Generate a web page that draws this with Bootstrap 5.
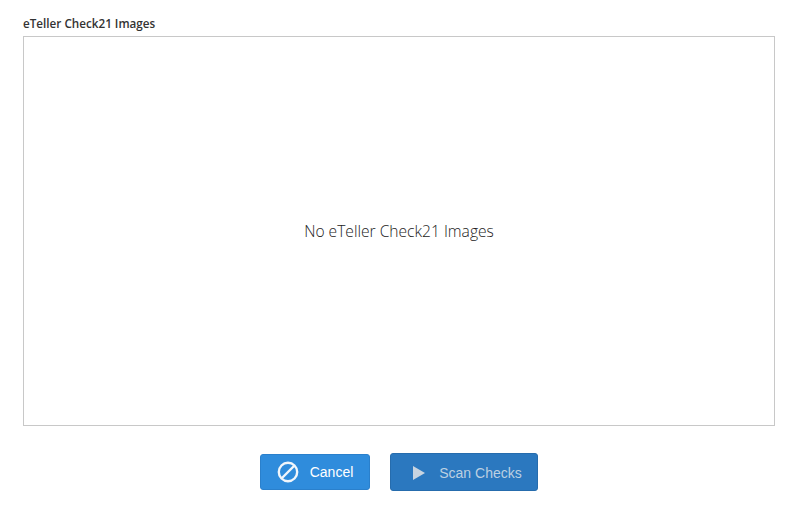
<!DOCTYPE html>
<html lang="en">
<head>
<meta charset="utf-8">
<title>eTeller Check21 Images</title>
<link href="https://cdn.jsdelivr.net/npm/bootstrap@5.3.0/dist/css/bootstrap.min.css" rel="stylesheet">
<style>
html,body{height:100%;background:#fff;overflow:hidden}
.pane{padding:16px 22px 0 23px;height:519px}
.pane-label{font-family:"Open Sans","Noto Sans",sans-serif;font-size:11.7px;font-weight:600;line-height:15px;height:20px;color:#333;margin:0}
.img-box{height:390px;border:1px solid #c8c8c8;font-family:"Open Sans","Noto Sans",sans-serif;font-size:15.6px;font-weight:300;color:#222;padding-top:2px}
.btn-row{padding-top:27px;gap:20px;margin-left:0}
.act{font-family:"Liberation Sans",sans-serif;font-size:14px;color:#fff;border-radius:3px;padding:0}
.act-cancel{width:110px;height:36px;background:#2f8cdc;border:1px solid #2a80cc;gap:11px}
.act-scan{width:148px;height:38px;background:#2b78bf;border:1px solid #266cad;gap:14px;padding:2px 0 0 7px}
.act-scan:disabled{opacity:1;background:#2b78bf;border-color:#266cad;color:#bcd0e2}
.act-cancel:hover{background:#2f8cdc;color:#fff;border-color:#2a80cc}
</style>
</head>
<body>
<div class="pane">
  <p class="pane-label">eTeller Check21 Images</p>
  <div class="img-box d-flex align-items-center justify-content-center">No eTeller Check21 Images</div>
  <div class="btn-row d-flex justify-content-center align-items-center">
    <button type="button" class="btn act act-cancel d-inline-flex align-items-center justify-content-center">
      <svg width="22" height="22" viewBox="0 0 22 22" aria-hidden="true"><circle cx="11" cy="11" r="9.2" fill="none" stroke="#f1f6fb" stroke-width="2.4"/><line x1="5" y1="17" x2="17" y2="5" stroke="#f1f6fb" stroke-width="2.4"/></svg>
      <span>Cancel</span>
    </button>
    <button type="button" class="btn act act-scan d-inline-flex align-items-center justify-content-center" disabled>
      <svg width="12" height="14" viewBox="0 0 12 14" aria-hidden="true"><polygon points="0,0 12,7 0,14" fill="#c8d4e0"/></svg>
      <span>Scan Checks</span>
    </button>
  </div>
</div>
<script src="https://cdn.jsdelivr.net/npm/bootstrap@5.3.0/dist/js/bootstrap.bundle.min.js"></script>
</body>
</html>
